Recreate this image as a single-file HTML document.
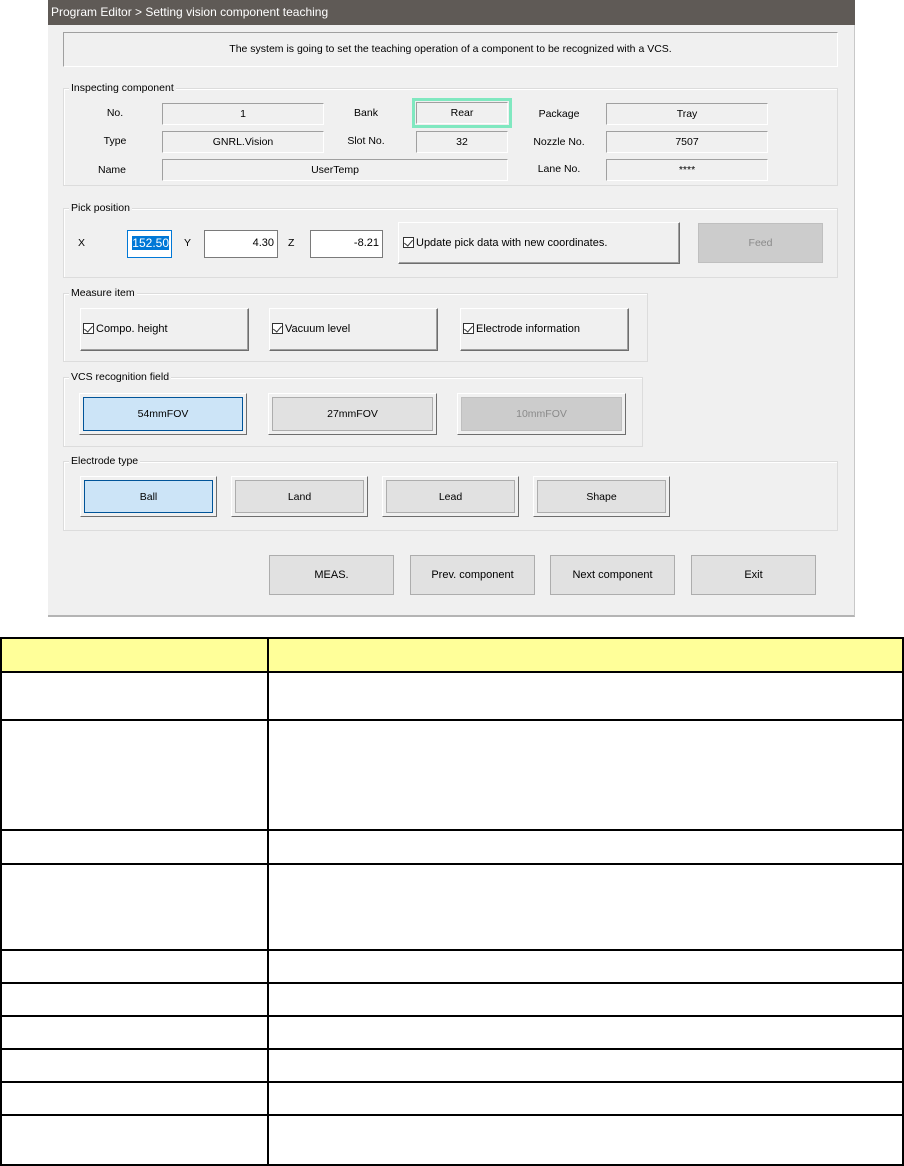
<!DOCTYPE html>
<html><head><meta charset="utf-8"><style>
*{box-sizing:border-box;margin:0;padding:0}
body{width:904px;height:1166px;background:#fff;position:relative;overflow:hidden;font-family:"Liberation Sans",sans-serif;font-size:10.5px;color:#000}
.a{position:absolute}
.dlg{left:48px;top:0;width:807px;height:617px;background:#f0f0f0;border-right:1px solid #c8c8c8;border-bottom:2px solid #b4b4b4}
.title{left:48px;top:0;width:807px;height:25px;background:#5f5a56;color:#fff;font-size:12px;line-height:25px;padding-left:3px}
.grp{border:1px solid #dcdcdc;box-shadow:inset 1px 1px 0 #fff}
.lg{background:#f0f0f0;padding:0 2px;font-size:10.5px;line-height:12px}
.fld{border:1px solid #fff;border-top-color:#a0a0a0;border-left-color:#a0a0a0;text-align:center;line-height:20px;background:#f0f0f0}
.lbl{text-align:center;line-height:20px}
.in{background:#fff;border:1px solid #7a7a7a;text-align:right;padding-right:3px;font-size:11px;line-height:25px}
.rb{background:#f0f0f0;border:1px solid;border-color:#fff #6e6e6e #6e6e6e #fff;box-shadow:inset -1px -1px 0 #a0a0a0}
.cb{display:inline-block;width:11px;height:11px;border:1px solid #333;vertical-align:-2px;margin-right:2px;position:relative;background:#fff}
.cb:after{content:"";position:absolute;left:2px;top:0px;width:4px;height:7px;border:solid #333;border-width:0 1px 1px 0;transform:rotate(40deg)}
.tb{border:1px solid;border-color:#fff #6e6e6e #6e6e6e #fff;background:#f0f0f0;padding:3px}
.tb div{width:100%;height:100%;border:1px solid #adadad;background:#e1e1e1;text-align:center;display:flex;align-items:center;justify-content:center}
.tb.sel div{border:1px solid #005499;background:#cce4f7}
.tb.dis div{background:#cccccc;border-color:#bfbfbf;color:#8a8a8a}
.fb{border:1px solid #adadad;background:#e1e1e1;display:flex;align-items:center;justify-content:center;font-size:11px}
table{position:absolute;left:0;top:637px;border-collapse:collapse;width:904px}
td{border:2px solid #000;padding:0}
</style></head><body>
<div class="a dlg"></div>
<div class="a title">Program Editor &gt; Setting vision component teaching</div>
<div class="a" style="left:63px;top:32px;width:775px;height:35px;border:1px solid;border-color:#a0a0a0 #fff #fff #a0a0a0;text-align:center;line-height:33px;font-size:10.5px">The system is going to set the teaching operation of a component to be recognized with a VCS.</div>

<div class="a grp" style="left:63px;top:88px;width:775px;height:98px"></div>
<div class="a lg" style="left:69px;top:82px">Inspecting component</div>
<div class="a lbl" style="left:85px;top:103px;width:60px">No.</div>
<div class="a fld" style="left:162px;top:103px;width:162px;height:22px">1</div>
<div class="a lbl" style="left:336px;top:103px;width:60px">Bank</div>
<div class="a" style="left:412px;top:98px;width:100px;height:30px;border:3px solid #80e8c0"></div>
<div class="a fld" style="left:416px;top:102px;width:92px;height:22px">Rear</div>
<div class="a lbl" style="left:529px;top:104px;width:60px">Package</div>
<div class="a fld" style="left:606px;top:103px;width:162px;height:22px">Tray</div>
<div class="a lbl" style="left:85px;top:131px;width:60px">Type</div>
<div class="a fld" style="left:162px;top:131px;width:162px;height:22px">GNRL.Vision</div>
<div class="a lbl" style="left:336px;top:131px;width:60px">Slot No.</div>
<div class="a fld" style="left:416px;top:131px;width:92px;height:22px">32</div>
<div class="a lbl" style="left:529px;top:132px;width:60px">Nozzle No.</div>
<div class="a fld" style="left:606px;top:131px;width:162px;height:22px">7507</div>
<div class="a lbl" style="left:82px;top:160px;width:60px">Name</div>
<div class="a fld" style="left:162px;top:159px;width:346px;height:22px">UserTemp</div>
<div class="a lbl" style="left:529px;top:159px;width:60px">Lane No.</div>
<div class="a fld" style="left:606px;top:159px;width:162px;height:22px">****</div>

<div class="a grp" style="left:63px;top:208px;width:775px;height:70px"></div>
<div class="a lg" style="left:69px;top:202px">Pick position</div>
<div class="a" style="left:78px;top:237px">X</div>
<div class="a in" style="left:127px;top:230px;width:45px;height:28px;border-color:#0078d7;font-size:12px;padding-right:2px"><span style="background:#0078d7;color:#fff">152.50</span></div>
<div class="a" style="left:184px;top:237px">Y</div>
<div class="a in" style="left:204px;top:230px;width:74px;height:28px">4.30</div>
<div class="a" style="left:288px;top:237px">Z</div>
<div class="a in" style="left:310px;top:230px;width:73px;height:28px">-8.21</div>
<div class="a rb" style="left:398px;top:222px;width:282px;height:42px;line-height:40px;padding-left:4px;font-size:11px"><span class="cb"></span>Update pick data with new coordinates.</div>
<div class="a" style="left:698px;top:223px;width:125px;height:40px;background:#cccccc;border:1px solid #bfbfbf;color:#8a8a8a;text-align:center;line-height:38px">Feed</div>

<div class="a grp" style="left:63px;top:293px;width:585px;height:69px"></div>
<div class="a lg" style="left:69px;top:287px">Measure item</div>
<div class="a rb" style="left:80px;top:308px;width:169px;height:43px;line-height:41px;padding-left:2px;font-size:11px"><span class="cb"></span>Compo. height</div>
<div class="a rb" style="left:269px;top:308px;width:169px;height:43px;line-height:41px;padding-left:2px;font-size:11px"><span class="cb"></span>Vacuum level</div>
<div class="a rb" style="left:460px;top:308px;width:169px;height:43px;line-height:41px;padding-left:2px;font-size:11px"><span class="cb"></span>Electrode information</div>

<div class="a grp" style="left:63px;top:377px;width:580px;height:70px"></div>
<div class="a lg" style="left:69px;top:371px">VCS recognition field</div>
<div class="a tb sel" style="left:79px;top:393px;width:168px;height:42px"><div>54mmFOV</div></div>
<div class="a tb" style="left:268px;top:393px;width:169px;height:42px"><div>27mmFOV</div></div>
<div class="a tb dis" style="left:457px;top:393px;width:169px;height:42px"><div>10mmFOV</div></div>

<div class="a grp" style="left:63px;top:461px;width:775px;height:70px"></div>
<div class="a lg" style="left:69px;top:455px">Electrode type</div>
<div class="a tb sel" style="left:80px;top:476px;width:137px;height:41px"><div>Ball</div></div>
<div class="a tb" style="left:231px;top:476px;width:137px;height:41px"><div>Land</div></div>
<div class="a tb" style="left:382px;top:476px;width:137px;height:41px"><div>Lead</div></div>
<div class="a tb" style="left:533px;top:476px;width:137px;height:41px"><div>Shape</div></div>

<div class="a fb" style="left:269px;top:555px;width:125px;height:40px">MEAS.</div>
<div class="a fb" style="left:410px;top:555px;width:125px;height:40px">Prev. component</div>
<div class="a fb" style="left:550px;top:555px;width:125px;height:40px">Next component</div>
<div class="a fb" style="left:691px;top:555px;width:125px;height:40px">Exit</div>

<table>
<tr style="height:34px;background:#ffff99"><td style="width:267px"></td><td></td></tr>
<tr style="height:48px"><td></td><td></td></tr>
<tr style="height:110px"><td></td><td></td></tr>
<tr style="height:34px"><td></td><td></td></tr>
<tr style="height:86px"><td></td><td></td></tr>
<tr style="height:33px"><td></td><td></td></tr>
<tr style="height:33px"><td></td><td></td></tr>
<tr style="height:33px"><td></td><td></td></tr>
<tr style="height:33px"><td></td><td></td></tr>
<tr style="height:33px"><td></td><td></td></tr>
<tr style="height:50px"><td></td><td></td></tr>
</table>
</body></html>
